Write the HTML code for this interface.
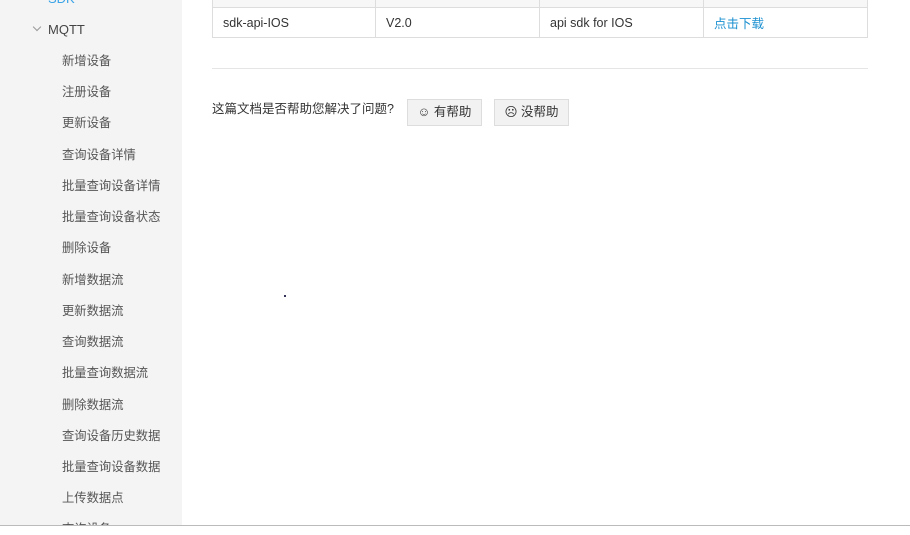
<!DOCTYPE html>
<html><head><meta charset="utf-8"><style>
*{margin:0;padding:0;box-sizing:border-box}
body{width:910px;height:535px;overflow:hidden;background:#fff;font-family:"Liberation Sans","Noto Sans CJK SC",sans-serif;color:#333;font-size:13px;position:relative}
.side{position:absolute;left:0;top:0;width:182px;height:526px;background:#f4f4f4;overflow:hidden}
.side div{position:absolute;left:62px;font-size:12.3px;color:#555;line-height:16px}
.abs{position:absolute}
.line{position:absolute;left:0;top:525px;width:910px;height:1px;background:#bbb}
table{position:absolute;left:212px;top:-23px;width:656px;border-collapse:collapse}
td{border:1px solid #ddd;height:30px;padding:0 10px;font-size:12.5px;color:#333}
tr.h td{background:#f7f7f7}
.btn{position:absolute;top:99px;height:27px;width:75px;border:1px solid #ddd;background:#f2f2f2;font-size:12.5px;line-height:25px;text-align:center;color:#333}
</style></head><body>
<div class="side">
<div style="left:48px;top:-9px;color:#3ba4e6;font-size:13px">SDK</div>
<div style="left:34px;top:24px;width:6px;height:6px;border-right:1px solid #999;border-bottom:1px solid #999;transform:rotate(45deg)"></div>
<div style="left:48px;top:22px;color:#444;font-size:13px">MQTT</div>
<div style="top:53px">新增设备</div>
<div style="top:84px">注册设备</div>
<div style="top:115px">更新设备</div>
<div style="top:147px">查询设备详情</div>
<div style="top:178px">批量查询设备详情</div>
<div style="top:209px">批量查询设备状态</div>
<div style="top:240px">删除设备</div>
<div style="top:272px">新增数据流</div>
<div style="top:303px">更新数据流</div>
<div style="top:334px">查询数据流</div>
<div style="top:365px">批量查询数据流</div>
<div style="top:397px">删除数据流</div>
<div style="top:428px">查询设备历史数据</div>
<div style="top:459px">批量查询设备数据</div>
<div style="top:490px">上传数据点</div>
<div style="top:521px">查询设备</div>
</div>
<table>
<tr class="h"><td style="width:163px"></td><td style="width:164px"></td><td style="width:164px"></td><td></td></tr>
<tr><td>sdk-api-IOS</td><td>V2.0</td><td>api sdk for IOS</td><td style="color:#1a8fd0">点击下载</td></tr>
</table>
<div class="abs" style="left:212px;top:68px;width:656px;height:1px;background:#e5e5e5"></div>
<div class="abs" style="left:212px;top:98px;font-size:12.5px;color:#333">这篇文档是否帮助您解决了问题?</div>
<div class="btn" style="left:407px">☺ 有帮助</div>
<div class="btn" style="left:494px">☹ 没帮助</div>
<div class="abs" style="left:284px;top:295px;width:2px;height:2px;background:#335"></div>
<div class="line"></div>
</body></html>
